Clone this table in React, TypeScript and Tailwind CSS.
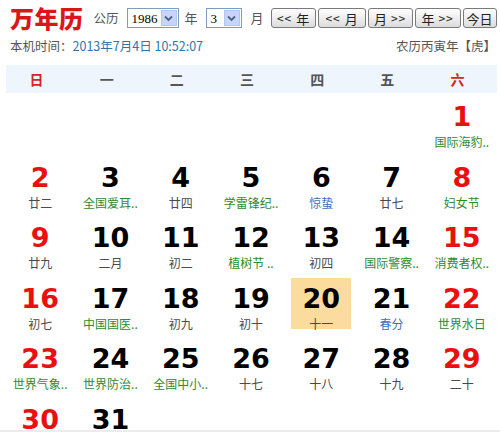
import React from 'react';

type Kind = 'lunar' | 'fest' | 'term';

interface Day {
  d: number;
  label: string;
  kind: Kind;
}

const days: (Day | null)[] = [
  null, null, null, null, null, null,
  { d: 1, label: '国际海豹..', kind: 'fest' },
  { d: 2, label: '廿二', kind: 'lunar' },
  { d: 3, label: '全国爱耳..', kind: 'fest' },
  { d: 4, label: '廿四', kind: 'lunar' },
  { d: 5, label: '学雷锋纪..', kind: 'fest' },
  { d: 6, label: '惊蛰', kind: 'term' },
  { d: 7, label: '廿七', kind: 'lunar' },
  { d: 8, label: '妇女节', kind: 'fest' },
  { d: 9, label: '廿九', kind: 'lunar' },
  { d: 10, label: '二月', kind: 'lunar' },
  { d: 11, label: '初二', kind: 'lunar' },
  { d: 12, label: '植树节 ..', kind: 'fest' },
  { d: 13, label: '初四', kind: 'lunar' },
  { d: 14, label: '国际警察..', kind: 'fest' },
  { d: 15, label: '消费者权..', kind: 'fest' },
  { d: 16, label: '初七', kind: 'lunar' },
  { d: 17, label: '中国国医..', kind: 'fest' },
  { d: 18, label: '初九', kind: 'lunar' },
  { d: 19, label: '初十', kind: 'lunar' },
  { d: 20, label: '十一', kind: 'lunar' },
  { d: 21, label: '春分', kind: 'term' },
  { d: 22, label: '世界水日', kind: 'fest' },
  { d: 23, label: '世界气象..', kind: 'fest' },
  { d: 24, label: '世界防治..', kind: 'fest' },
  { d: 25, label: '全国中小..', kind: 'fest' },
  { d: 26, label: '十七', kind: 'lunar' },
  { d: 27, label: '十八', kind: 'lunar' },
  { d: 28, label: '十九', kind: 'lunar' },
  { d: 29, label: '二十', kind: 'lunar' },
  { d: 30, label: '', kind: 'lunar' },
  { d: 31, label: '', kind: 'lunar' },
];

const weekNames = ['日', '一', '二', '三', '四', '五', '六'];

const cjk = { fontFamily: '"Noto Sans CJK SC", "DejaVu Sans", sans-serif' };

const labelColor: Record<Kind, string> = {
  lunar: 'text-[#4a4a4a]',
  fest: 'text-[#2e8a2e]',
  term: 'text-[#3b72c0]',
};

const FakeSelect: React.FC<{ value: string; width: string }> = ({ value, width }) => (
  <div className={`${width} h-[20px] shrink-0 flex items-center border border-[#7f9db9] bg-white`}>
    <span className="flex-1 pl-[4px] text-[13px] leading-none text-black" style={{ fontFamily: '"Liberation Serif", serif' }}>
      {value}
    </span>
    <span className="w-[16px] h-[16px] mr-[1px] flex items-center justify-center bg-[#c6d6f8] border border-[#b3c6ef]">
      <svg width="9" height="7" viewBox="0 0 9 7">
        <path d="M1 1.5 L4.5 5 L8 1.5" fill="none" stroke="#4d6185" strokeWidth="1.8" />
      </svg>
    </span>
  </div>
);

// parts: pieces of the label, shown with a small gap between them
const NavButton: React.FC<{ parts: string[]; width: string }> = ({ parts, width }) => (
  <button
    className={`${width} h-[20px] shrink-0 flex items-center justify-center gap-[4px] whitespace-nowrap rounded-[3px] border border-[#7a7a7a] bg-gradient-to-b from-white to-[#dcdcdc] text-[13px] leading-none text-[#222]`}
    style={cjk}
  >
    {parts.map((p, i) => (
      <span key={i} className={p.includes('<') || p.includes('>') ? 'tracking-[1px] text-[12px]' : ''}>
        {p}
      </span>
    ))}
  </button>
);

export default function App() {
  return (
    <div className="w-[500px] h-[432px] bg-white overflow-hidden relative" style={cjk}>
      <div className="h-[65px]">
        <div className="flex items-center pt-[8px] h-[28px] whitespace-nowrap">
          <h1 className="ml-[10px] shrink-0 text-[24px] font-black leading-none tracking-[0.5px] text-[#d81818]">万年历</h1>
          <span className="ml-[10px] shrink-0 text-[12.5px] text-[#555]">公历</span>
          <div className="ml-[8px] shrink-0">
            <FakeSelect value="1986" width="w-[52px]" />
          </div>
          <span className="ml-[6px] shrink-0 text-[13px] text-[#555]">年</span>
          <div className="ml-[8px] shrink-0">
            <FakeSelect value="3" width="w-[36px]" />
          </div>
          <span className="ml-[9px] shrink-0 text-[13px] text-[#555]">月</span>
          <div className="ml-[7px] shrink-0 flex gap-[2px]">
            <NavButton parts={['<<', '年']} width="w-[45px]" />
            <NavButton parts={['<<', '月']} width="w-[48px]" />
            <NavButton parts={['月', '>>']} width="w-[45px]" />
            <NavButton parts={['年', '>>']} width="w-[46px]" />
            <NavButton parts={['今日']} width="w-[34px]" />
          </div>
        </div>
        <div className="flex justify-between items-center mt-[12px] pl-[10px] pr-[4px] text-[12.5px] leading-none whitespace-nowrap">
          <span className="text-[#555]">
            本机时间：<span className="text-[#2f76a8]">2013年7月4日 10:52:07</span>
          </span>
          <span className="text-[#555]">农历丙寅年【虎】</span>
        </div>
      </div>

      <div className="ml-[6px] w-[491px] h-[28px] grid grid-cols-7 items-center bg-[#eef5fd]">
        {weekNames.map((w, i) => (
          <div
            key={w}
            className={`pr-[9px] text-center text-[14px] font-bold ${i === 0 || i === 6 ? 'text-[#d42424]' : 'text-[#555]'}`}
          >
            {w}
          </div>
        ))}
      </div>

      <div className="ml-[5px] w-[492px] grid grid-cols-7 auto-rows-[60.5px]">
        {days.map((day, i) => {
          if (!day) return <div key={`e${i}`} />;
          const weekend = i % 7 === 0 || i % 7 === 6;
          const today = day.d === 20;
          return (
            <div key={day.d} className="flex justify-center items-start">
              <div
                className={
                  today
                    ? 'w-[60px] h-[51px] mt-[3.5px] pt-[6.5px] flex flex-col items-center bg-[#fcdc9e]'
                    : 'w-[60px] pt-[10px] flex flex-col items-center'
                }
              >
                <span
                  className={`h-[27px] text-[27px] leading-[27px] font-bold ${weekend ? 'text-[#e81010]' : 'text-black'}`}
                  style={{ fontFamily: '"DejaVu Sans", Verdana, sans-serif' }}
                >
                  {day.d}
                </span>
                <span className={`mt-[4px] h-[16px] text-[12px] leading-[16px] whitespace-nowrap ${labelColor[day.kind]}`}>
                  {day.label}
                </span>
              </div>
            </div>
          );
        })}
      </div>

      <div className="absolute left-0 right-0 top-[430px] h-[2px] bg-[#ececec]" />
    </div>
  );
}
